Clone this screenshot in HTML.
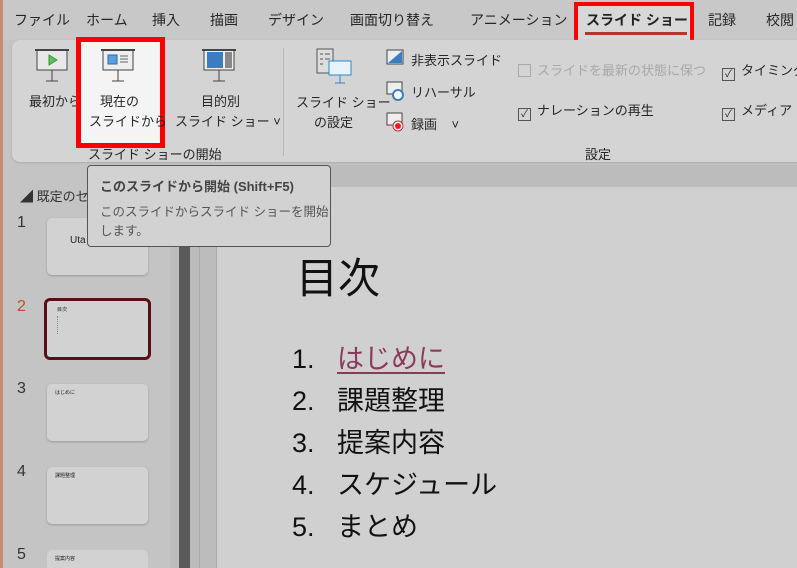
<!DOCTYPE html>
<html style="width:797px;height:568px;overflow:hidden"><head><meta charset="utf-8"><style>
*{margin:0;padding:0;box-sizing:border-box}
body{width:797px;height:568px;overflow:hidden;background:#c4c4c4;font-family:"Liberation Sans","Noto Sans CJK JP",sans-serif;color:#222;position:relative}
.a{position:absolute;white-space:nowrap}
.tab{font-size:14px;top:10px;color:#262626}
.rb{font-size:13px;color:#262626}
.cb{display:inline-block;width:13px;height:13px;border:1px solid #555;vertical-align:-2px;margin-right:6px;font-size:10px;line-height:11px;text-align:center}
</style></head><body>
<div class="a" style="left:0;top:0;width:797px;height:40px;background:#c8c8c8"></div>
<div class="a" style="left:0;top:0;width:3px;height:568px;background:#c98a70"></div>
<span class="a tab" style="left:14px">ファイル</span>
<span class="a tab" style="left:86px">ホーム</span>
<span class="a tab" style="left:152px">挿入</span>
<span class="a tab" style="left:210px">描画</span>
<span class="a tab" style="left:268px">デザイン</span>
<span class="a tab" style="left:350px">画面切り替え</span>
<span class="a tab" style="left:470px">アニメーション</span>
<div class="a" style="left:574px;top:2px;width:120px;height:42px;border:4px solid #f00;background:#d8d8d8"></div>
<span class="a tab" style="left:586px;font-weight:bold;color:#222">スライド ショー</span>
<div class="a" style="left:585px;top:32px;width:102px;height:3px;background:#b03a2a"></div>
<span class="a tab" style="left:708px">記録</span>
<span class="a tab" style="left:766px">校閲</span>
<div class="a" style="left:12px;top:40px;width:800px;height:122px;background:#d4d4d4;border-radius:8px;box-shadow:0 1px 2px #aaa"></div>
<svg class="a" style="left:35px;top:47px" width="36" height="40"><rect x="2" y="3" width="30" height="20" fill="#e8e8e8" stroke="#444"/><line x1="0" y1="3" x2="34" y2="3" stroke="#444" stroke-width="2"/><path d="M14 8 L22 13 L14 18Z" fill="#6b6" stroke="#393"/><line x1="17" y1="23" x2="17" y2="34" stroke="#444"/><line x1="11" y1="34" x2="23" y2="34" stroke="#444"/></svg>
<span class="a rb" style="left:29px;top:91px">最初から</span>
<div class="a" style="left:76px;top:37px;width:89px;height:111px;border:5px solid #f00;background:#f4f4f4"></div>
<svg class="a" style="left:101px;top:47px" width="36" height="40"><rect x="2" y="3" width="30" height="20" fill="#eee" stroke="#444"/><line x1="0" y1="3" x2="34" y2="3" stroke="#444" stroke-width="2"/><rect x="7" y="8" width="9" height="9" fill="#5aa0e0" stroke="#2a6aaa"/><path d="M19 9h8M19 12h8M19 15h8" stroke="#666"/><line x1="17" y1="23" x2="17" y2="34" stroke="#444"/><line x1="11" y1="34" x2="23" y2="34" stroke="#444"/></svg>
<span class="a rb" style="left:100px;top:91px">現在の</span>
<span class="a rb" style="left:89px;top:111px">スライドから</span>
<svg class="a" style="left:202px;top:47px" width="36" height="40"><rect x="2" y="3" width="30" height="20" fill="#eee" stroke="#444"/><line x1="0" y1="3" x2="34" y2="3" stroke="#444" stroke-width="2"/><rect x="5" y="5" width="16" height="16" fill="#3a7ec0"/><rect x="23" y="5" width="7" height="16" fill="#888"/><line x1="17" y1="23" x2="17" y2="34" stroke="#444"/><line x1="11" y1="34" x2="23" y2="34" stroke="#444"/></svg>
<span class="a rb" style="left:201px;top:91px">目的別</span>
<span class="a rb" style="left:175px;top:111px">スライド ショー ˅</span>
<span class="a rb" style="left:88px;top:144px">スライド ショーの開始</span>
<div class="a" style="left:283px;top:48px;width:1px;height:108px;background:#b8b8b8"></div>
<svg class="a" style="left:315px;top:47px" width="40" height="40"><rect x="2" y="2" width="16" height="24" fill="#ddd" stroke="#555"/><path d="M5 7h3M10 7h5M5 12h3M10 12h5M5 17h3" stroke="#555"/><rect x="14" y="14" width="22" height="14" fill="#e8f2fa" stroke="#2a8ac8"/><line x1="25" y1="28" x2="25" y2="36" stroke="#2a8ac8"/><line x1="20" y1="36" x2="30" y2="36" stroke="#2a8ac8"/></svg>
<span class="a rb" style="left:296px;top:92px">スライド ショー</span>
<span class="a rb" style="left:314px;top:112px">の設定</span>
<svg class="a" style="left:386px;top:49px" width="18" height="16"><rect x="1" y="1" width="16" height="14" fill="#eee" stroke="#444"/><path d="M2 14 L16 2 V14Z" fill="#3a7ec0"/></svg>
<span class="a rb" style="left:411px;top:50px">非表示スライド</span>
<svg class="a" style="left:386px;top:81px" width="20" height="20"><rect x="1" y="1" width="15" height="12" fill="#eee" stroke="#444"/><circle cx="12" cy="14" r="5" fill="#fff" stroke="#3a7ec0" stroke-width="2"/></svg>
<span class="a rb" style="left:411px;top:82px">リハーサル</span>
<svg class="a" style="left:386px;top:112px" width="20" height="20"><rect x="1" y="1" width="15" height="12" fill="#eee" stroke="#444"/><circle cx="12" cy="14" r="5" fill="#fff" stroke="#c22"/><circle cx="12" cy="14" r="3" fill="#d22"/></svg>
<span class="a rb" style="left:411px;top:114px">録画 &nbsp;&nbsp;&nbsp;˅</span>
<span class="a rb" style="left:518px;top:60px;color:#a8a8a8"><span class="cb" style="border-color:#aaa"></span>スライドを最新の状態に保つ</span>
<span class="a rb" style="left:518px;top:100px"><span class="cb">✓</span>ナレーションの再生</span>
<span class="a rb" style="left:722px;top:60px"><span class="cb">✓</span>タイミングを</span>
<span class="a rb" style="left:722px;top:100px"><span class="cb">✓</span>メディア コ</span>
<span class="a rb" style="left:585px;top:144px">設定</span>
<span class="a" style="left:20px;top:186px;font-size:13px;color:#333">◢ 既定のセ</span>
<div class="a" style="left:170px;top:165px;width:10px;height:403px;background:#bdbdbd"></div>
<div class="a" style="left:179px;top:245px;width:11px;height:323px;background:#5a5a5a"></div>
<div class="a" style="left:190px;top:165px;width:607px;height:403px;background:#bcbcbc"></div>
<div class="a" style="left:199px;top:185px;width:1px;height:383px;background:#aaa"></div>
<div class="a" style="left:216px;top:187px;width:581px;height:381px;background:#d0d0d0;border-left:1px solid #aaa"></div>
<span class="a" style="left:17px;top:214px;font-size:16px;color:#333">1</span>
<div class="a" style="left:47px;top:218px;width:101px;height:57px;background:#d2d2d2;border-radius:5px;box-shadow:0 1px 2px #999"><span class="a" style="left:23px;top:17px;font-size:10px">Uta</span></div>
<span class="a" style="left:17px;top:298px;font-size:16px;color:#c0492b">2</span>
<div class="a" style="left:44px;top:298px;width:107px;height:62px;background:#d2d2d2;border:3px solid #5a0f14;border-radius:6px"><span class="a" style="left:10px;top:5px;font-size:5px">目次</span><div class="a" style="left:10px;top:15px;width:12px;height:18px;border-left:1px dotted #889"></div></div>
<span class="a" style="left:17px;top:380px;font-size:16px;color:#333">3</span>
<div class="a" style="left:47px;top:384px;width:101px;height:57px;background:#d2d2d2;border-radius:5px;box-shadow:0 1px 2px #999"><span class="a" style="left:8px;top:5px;font-size:5px">はじめに</span></div>
<span class="a" style="left:17px;top:463px;font-size:16px;color:#333">4</span>
<div class="a" style="left:47px;top:467px;width:101px;height:57px;background:#d2d2d2;border-radius:5px;box-shadow:0 1px 2px #999"><span class="a" style="left:8px;top:5px;font-size:5px">課題整理</span></div>
<span class="a" style="left:17px;top:546px;font-size:16px;color:#333">5</span>
<div class="a" style="left:47px;top:550px;width:101px;height:18px;background:#d2d2d2;border-radius:5px 5px 0 0;overflow:hidden"><span class="a" style="left:8px;top:5px;font-size:5px">提案内容</span></div>
<span class="a" style="left:296px;top:245px;font-size:42px;color:#111">目次</span>
<div class="a" style="left:292px;top:338px;font-size:27px;line-height:42px;color:#111">
<div>1.&nbsp;&nbsp; <span style="color:#8a3a5a;text-decoration:underline;text-underline-offset:4px">はじめに</span></div>
<div>2.&nbsp;&nbsp; 課題整理</div><div>3.&nbsp;&nbsp; 提案内容</div><div>4.&nbsp;&nbsp; スケジュール</div><div>5.&nbsp;&nbsp; まとめ</div></div>
<div class="a" style="left:87px;top:165px;width:244px;height:82px;background:#d2d2d2;border:1px solid #555;border-radius:4px">
<span class="a" style="left:12px;top:10px;font-size:13px;font-weight:bold;color:#444">このスライドから開始 (Shift+F5)</span>
<span class="a" style="left:12px;top:35px;font-size:12.5px;color:#555">このスライドからスライド ショーを開始</span>
<span class="a" style="left:12px;top:54px;font-size:12.5px;color:#555">します。</span>
</div>
</body></html>
